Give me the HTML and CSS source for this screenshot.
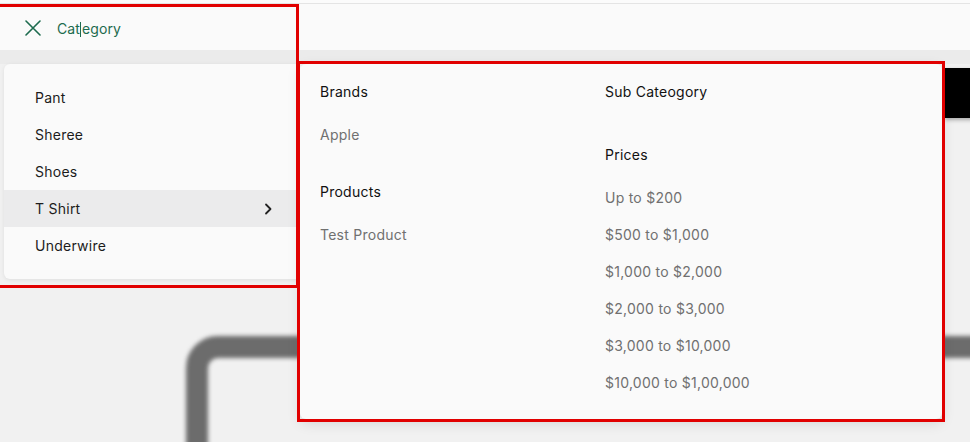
FILE: index.html
```html
<!DOCTYPE html>
<html lang="en">
<head>
<meta charset="utf-8">
<title>Category menu</title>
<link rel="stylesheet" href="styles.css">
</head>
<body>
<div class="page">
  <header class="topbar">
    <svg class="close-icon" width="16" height="16" viewBox="0 0 16 16" aria-hidden="true">
      <path d="M1 1 L15 15 M15 1 L1 15" stroke="#1d6b4e" stroke-width="1.6" fill="none" stroke-linecap="round"/>
    </svg>
    <div class="search-text">Cat<span class="caret"></span>egory</div>
  </header>

  <div class="backdrop">
    <div class="hero-bar"></div>
    <div class="image-frame"></div>
  </div>

  <div class="stage">
    <ul class="cat-menu">
      <li class="cat-item">Pant</li>
      <li class="cat-item">Sheree</li>
      <li class="cat-item">Shoes</li>
      <li class="cat-item active">T Shirt
        <svg class="chev" width="8" height="12" viewBox="0 0 8 12" aria-hidden="true">
          <path d="M2 1.5 L6.5 6 L2 10.5" stroke="#222" stroke-width="1.8" fill="none" stroke-linecap="round" stroke-linejoin="round"/>
        </svg>
      </li>
      <li class="cat-item">Underwire</li>
    </ul>

    <div class="mega">
      <div class="mega-col">
        <section class="group">
          <h3 class="group-title">Brands</h3>
          <ul class="group-list">
            <li>Apple</li>
          </ul>
        </section>
        <section class="group">
          <h3 class="group-title">Products</h3>
          <ul class="group-list">
            <li>Test Product</li>
          </ul>
        </section>
      </div>
      <div class="mega-col">
        <section class="group">
          <h3 class="group-title">Sub Cateogory</h3>
          <ul class="group-list"></ul>
        </section>
        <section class="group">
          <h3 class="group-title">Prices</h3>
          <ul class="group-list">
            <li>Up to $200</li>
            <li>$500 to $1,000</li>
            <li>$1,000 to $2,000</li>
            <li>$2,000 to $3,000</li>
            <li>$3,000 to $10,000</li>
            <li>$10,000 to $1,00,000</li>
          </ul>
        </section>
      </div>
    </div>
  </div>

  <div class="mark mark-left"></div>
  <div class="mark mark-right"></div>
</div>
</body>
</html>
```

FILE: styles.css
```css
* { box-sizing: border-box; }

html, body {
  margin: 0;
  padding: 0;
}

body {
  width: 970px;
  height: 442px;
  overflow: hidden;
  background: #f0f0f0;
  font-family: Inter, "Noto Sans", Roboto, sans-serif;
  font-size: 14px;
  letter-spacing: 0.25px;
  color: #1c1c1c;
}

.page {
  position: relative;
  width: 970px;
  height: 442px;
  overflow: hidden;
  background: linear-gradient(#ebebeb 0, #ebebeb 64px, #f1f1f1 64px);
}

.topbar {
  position: relative;
  z-index: 2;
  height: 50px;
  display: flex;
  align-items: center;
  gap: 16px;
  padding-left: 25px;
  background: linear-gradient(#fbfbfb 0 3px, #e4e4e4 3px 4px, #fafafa 4px);
  padding-top: 6px;
}

.close-icon { display: block; }

.search-text {
  position: relative;
  color: #1d6b4e;
  font-size: 14px;
  letter-spacing: 0.1px;
}

.caret {
  display: inline-block;
  width: 1px;
  height: 15px;
  background: #1d6b4e;
  vertical-align: -3px;
  margin: 0 0.5px;
}

.backdrop {
  position: absolute;
  inset: 0;
  z-index: 0;
}

.hero-bar {
  position: absolute;
  left: 945px;
  top: 68px;
  width: 40px;
  height: 50px;
  background: #000;
  box-shadow: 0 2px 4px rgba(0,0,0,0.3);
}

.image-frame {
  position: absolute;
  left: 186px;
  top: 336px;
  width: 900px;
  height: 300px;
  border: 22px solid #6c6c6c;
  border-radius: 32px;
  filter: blur(2px);
}

.stage {
  position: relative;
  z-index: 1;
  display: flex;
  align-items: flex-start;
  padding-left: 4px;
  padding-top: 14px;
}

.cat-menu {
  list-style: none;
  margin: 0;
  padding: 15px 0;
  width: 298px;
  background: #fafafa;
  border-radius: 6px;
  box-shadow: 0 1px 4px rgba(0,0,0,0.08);
}

.cat-item {
  height: 37px;
  display: flex;
  align-items: center;
  justify-content: space-between;
  padding: 0 30px 0 31px;
  color: #1c1c1c;
}

.cat-item.active {
  background: #ebebec;
}

.chev { display: block; }

.mega {
  position: relative;
  margin-left: -2px;
  width: 642px;
  height: 355px;
  display: grid;
  grid-template-columns: 285px 285px;
  padding: 10px 20px 17px;
  background: #fafafa;
  border-radius: 6px;
  box-shadow: 0 4px 14px rgba(0,0,0,0.12);
}

.mega-col {
  display: flex;
  flex-direction: column;
  gap: 20px;
}

.group {
  display: flex;
  flex-direction: column;
  gap: 7px;
}

.group-title {
  margin: 0;
  font-size: 14px;
  font-weight: 400;
  line-height: 36px;
  color: #111;
}

.group-list {
  list-style: none;
  margin: 0;
  padding: 0;
  display: flex;
  flex-direction: column;
}

.group-list li {
  line-height: 37px;
  color: #707070;
  margin-top: -1px;
  margin-bottom: 1px;
}

.mark {
  position: absolute;
  z-index: 5;
  border: 3px solid #e10000;
  pointer-events: none;
}

.mark-left {
  left: -3px;
  top: 4px;
  width: 302px;
  height: 284px;
}

.mark-right {
  left: 297px;
  top: 61px;
  width: 648px;
  height: 361px;
}
```
